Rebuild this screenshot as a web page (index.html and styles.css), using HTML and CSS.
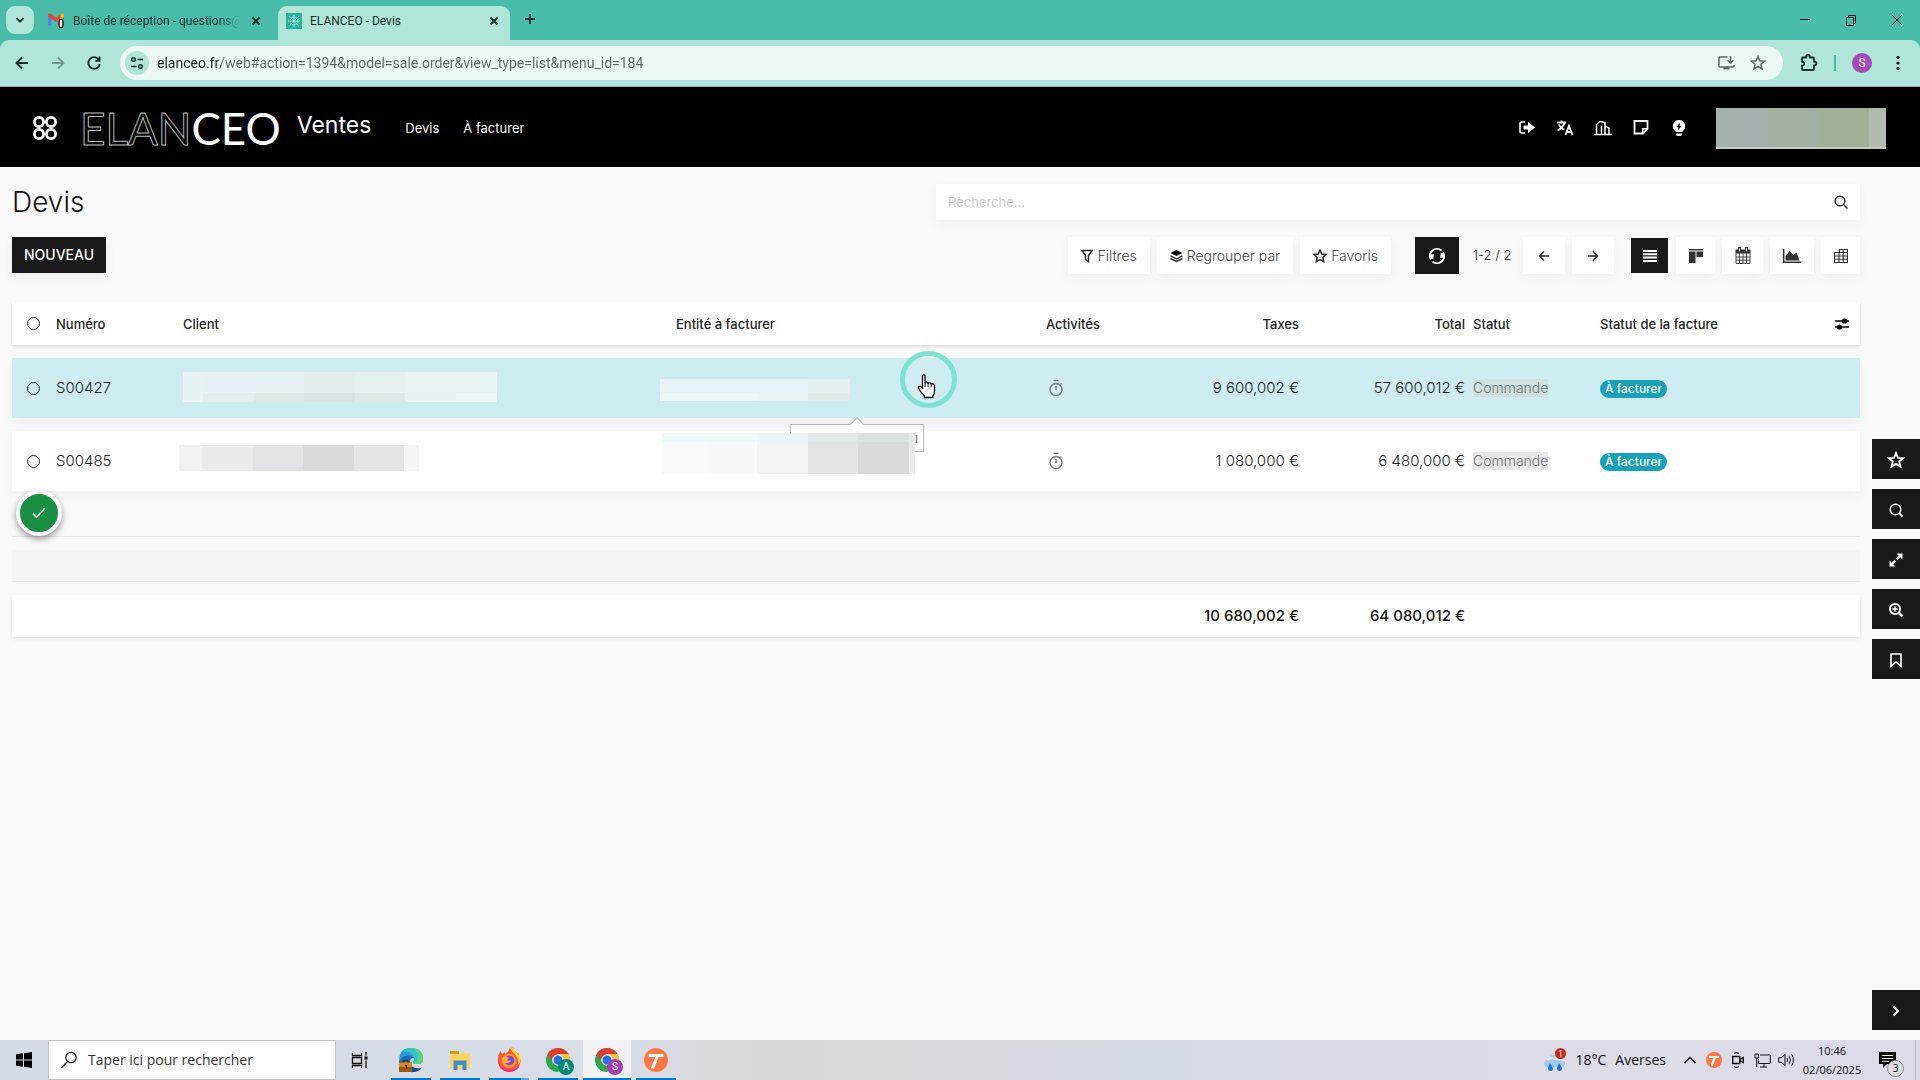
FILE: index.html
```html
<!DOCTYPE html>
<html lang="fr">
<head>
<meta charset="utf-8">
<title>ELANCEO - Devis</title>
<link rel="stylesheet" href="styles.css">
</head>
<body>
<div class="tabstrip">
  <button class="tab-list" aria-label="Rechercher des onglets"><svg width="12" height="12" viewBox="0 0 12 12"><path d="M2.5 4.2 6 7.7l3.500-3.500" class="line2"/></svg></button>
  <div class="tab">
    <svg class="favicon" width="17" height="16" viewBox="0 0 17 16"><path d="M0 2v10.500h3.500V5z" fill="#4285f4"/><path d="M0 3.500V1.500Q1 0 3 .8L8 4.800 13 .8V5L8 9z" fill="#ea4335"/><path d="M12.500 1.500Q15-.5 16 1.500V4l-3.500 3z" fill="#fbbc04"/><path d="M12.500 6.500 16 4v3z" fill="#34a853"/><rect x="10" y="6" width="6" height="9" rx="1.500" fill="#fff"/><rect x="11" y="6.500" width="4" height="8" rx="2" fill="#fff" stroke="#000" stroke-width="1.500"/></svg>
    <span class="tab-title tab-title-fade">Boîte de réception - questions@</span>
    <button class="tab-close" aria-label="Fermer l'onglet"><svg width="10" height="10" viewBox="0 0 10 10"><path d="m1.500 1.500 7 7m0-7-7 7" class="line2"/></svg></button>
  </div>
  <div class="tab tab-active">
    <svg class="favicon" width="16" height="16" viewBox="0 0 16 16"><path d="M0 0h16v16H0z" fill="#27b39c"/><g stroke="#c9f5ec" stroke-width="1" fill="none" stroke-dasharray="1.500 .7"><path d="M8 2v12M2 8h12M3.500 3.500l9 9M12.500 3.500l-9 9"/><circle cx="8" cy="8" r="4"/></g></svg>
    <span class="tab-title">ELANCEO - Devis</span>
    <button class="tab-close" aria-label="Fermer l'onglet"><svg width="10" height="10" viewBox="0 0 10 10"><path d="m1.500 1.500 7 7m0-7-7 7" class="line2"/></svg></button>
  </div>
  <button class="new-tab" aria-label="Nouvel onglet"><svg width="12" height="12" viewBox="0 0 12 12"><path d="M6 1v10M1 6h10" class="line2"/></svg></button>
  <div class="window-controls">
    <button aria-label="Réduire"><svg width="12" height="12" viewBox="0 0 12 12"><path d="M1 5.500h10" class="line1"/></svg></button>
    <button aria-label="Restaurer"><svg width="12" height="12" viewBox="0 0 12 12"><path d="M1.500 3.500h7v8h-7zM3.500 3.500v-2h7v8h-2" class="line1"/></svg></button>
    <button aria-label="Fermer"><svg width="12" height="12" viewBox="0 0 12 12"><path d="m1 1 10 10M11 1 1 11" class="line1"/></svg></button>
  </div>
</div>

<div class="toolbar">
  <button class="nav-btn" aria-label="Précédent"><svg width="16" height="16" viewBox="0 0 16 16"><path d="M14 8H3m5-5.500L2.500 8 8 13.500" class="line2"/></svg></button>
  <button class="nav-btn nav-off" aria-label="Suivant"><svg width="16" height="16" viewBox="0 0 16 16"><path d="M2 8h11M8 2.500 13.500 8 8 13.500" class="line2"/></svg></button>
  <button class="nav-btn" aria-label="Actualiser"><svg width="16" height="16" viewBox="0 0 16 16"><path d="M13 4.800A5.800 5.800 0 1 0 13.800 9M13.500 1.500v4.200H9.300" class="line2"/></svg></button>
  <div class="omnibox">
    <button class="site-info" aria-label="Informations du site"><svg width="14" height="14" viewBox="0 0 14 14"><circle cx="3.500" cy="3.500" r="1.800" class="line1b"/><circle cx="10.500" cy="10.500" r="1.800" class="line1b"/><path d="M7.500 3.500H13M1 10.500h5.500" class="line1b"/></svg></button>
    <input class="url" type="text" aria-label="Adresse" value="elanceo.fr/web#action=1394&amp;model=sale.order&amp;view_type=list&amp;menu_id=184">
    <button class="omni-btn" aria-label="Installer"><svg width="17" height="16" viewBox="0 0 17 16"><path d="M9.500 2H2Q1 2 1 3v8q0 1 1 1h13q1 0 1-1v-1M12.500 1v7M9.700 5.300l2.800 2.800 2.800-2.800" class="grey-line"/><path d="M5.500 12h6v2.500h-6z" fill="#5c6764"/></svg></button>
    <button class="omni-btn" aria-label="Ajouter aux favoris"><svg width="16" height="16" viewBox="0 0 16 16"><path d="m8 1.500 1.800 4.300 4.700.4-3.600 3.100 1.100 4.700L8 11.500 4 14l1.100-4.700-3.600-3.100 4.700-.4z" class="grey-line"/></svg></button>
  </div>
  <button class="ext" aria-label="Extensions"><svg width="18" height="18" viewBox="0 0 18 18"><path d="M2 4.500q0-1 1-1h3q.3-2.500 2-2.500t2 2.500h3q1 0 1 1v3q2.500.3 2.500 2t-2.500 2V15q0 1-1 1H3q-1 0-1-1v-3.300q2.200-.3 2.200-2T2 7.700z" fill="none" stroke="#17302b" stroke-width="1.800"/></svg></button>
  <span class="divider"></span>
  <button class="avatar" aria-label="Profil S">S</button>
  <button class="kebab" aria-label="Menu"><svg width="4" height="16" viewBox="0 0 4 16"><circle cx="2" cy="2.500" r="1.600"/><circle cx="2" cy="8" r="1.600"/><circle cx="2" cy="13.500" r="1.600"/></svg></button>
</div>

<header class="app-header">
  <button class="apps" aria-label="Applications"><svg width="26" height="26" viewBox="0 0 26 26"><g fill="none" stroke="#fff" stroke-width="2.800"><circle cx="7" cy="7" r="4.600"/><circle cx="19" cy="7" r="4.600"/><circle cx="7" cy="19" r="4.600"/><circle cx="19" cy="19" r="4.600"/></g></svg></button>
  <a class="logo" href="#"><span class="logo-outline">ELAN</span><span>CEO</span></a>
  <a class="app-name" href="#">Ventes</a>
  <nav class="menu"><a href="#">Devis</a><a href="#">À facturer</a></nav>
  <div class="systray">
    <button aria-label="Déconnexion"><svg width="18" height="18" viewBox="0 0 18 18"><path d="M7 3H3.500Q2 3 2 4.500v8Q2 14 3.500 14H7" fill="none" stroke="#fff" stroke-width="1.600"/><path d="M5.500 6.500H10V3l7 5.500-7 5.500v-3.500H5.500z" fill="#fff"/></svg></button>
    <button aria-label="Langue"><svg width="18" height="18" viewBox="0 0 18 18"><path d="M1 3.500h9M5.500 1.500v2M8.500 3.500Q7.500 8.500 1.500 11.500M3 5.500q1.500 4 5.500 5M9.500 16l3.400-9 3.600 9M10.800 13h4.500" fill="none" stroke="#fff" stroke-width="1.800"/></svg></button>
    <button aria-label="Société"><svg width="18" height="18" viewBox="0 0 18 18"><path d="M0 15.500h18M2.500 15.500V5.500L6 2.500l5 1v12M7.500 15.500V6.500M11 7l4 2v6.500" fill="none" stroke="#fff" stroke-width="1.500"/></svg></button>
    <button aria-label="Notes"><svg width="18" height="18" viewBox="0 0 18 18"><path d="M2.500 2h13v8l-4.500 4.500H2.500z" fill="none" stroke="#fff" stroke-width="1.800"/><path d="M16 9h-6v6z" fill="#fff"/><path d="m11.500 12.500 2-2h-2z"/></svg></button>
    <button aria-label="Aide"><svg width="18" height="18" viewBox="0 0 18 18"><path d="M9 1a6.200 6.200 0 0 1 3.500 11.300V13h-7v-.7A6.200 6.200 0 0 1 9 1z" fill="#fff"/><path d="M6 14.500h6v1q0 1.500-3 1.500t-3-1.500z" fill="#fff"/><path d="M10 3.500 6.500 8.200h2l-.700 3.300L11.500 7h-2z"/></svg></button>
  </div>
  <div class="user-mask"></div>
</header>

<main class="page">
  <section class="content">
    <div class="title-row">
      <h1>Devis</h1>
      <div class="search">
        <input type="search" placeholder="Recherche..." aria-label="Recherche">
        <button aria-label="Lancer la recherche"><svg width="14" height="14" viewBox="0 0 14 14"><circle cx="6" cy="6" r="4.800" class="dark-line"/><path d="m9.500 9.500 4 4" class="dark-line"/></svg></button>
      </div>
    </div>
    <div class="action-row">
      <button class="btn-new">NOUVEAU</button>
      <div class="filters">
        <button class="card"><svg width="12" height="14" viewBox="0 0 12 14"><path d="M1 1.500h10L7.500 6.500v6l-3-2v-4z" class="dark-line"/></svg>Filtres</button>
        <button class="card"><svg width="13" height="14" viewBox="0 0 13 14"><path d="m6.500 1 6 3-6 3-6-3z"/><path d="m.5 6.800 6 3 6-3M.5 9.500l6 3 6-3" fill="none" stroke="#333" stroke-width="1.400"/></svg>Regrouper par</button>
        <button class="card"><svg width="14" height="14" viewBox="0 0 14 14"><path d="m7 1 1.800 4 4.200.5-3.100 2.900.8 4.300L7 10.600l-3.700 2.100.8-4.300L1 5.500 5.200 5z" class="dark-line"/></svg>Favoris</button>
      </div>
      <button class="refresh" aria-label="Rafraîchir"><svg width="18" height="18" viewBox="0 0 18 18"><path d="M3 12.500A7 7 0 0 1 13.500 3.500M15 5.500A7 7 0 0 1 4.500 14.500" fill="none" stroke="#fff" stroke-width="1.900"/><path d="M1 6.500l2.500 1 2.300-.5-.5 5L2 12zM17 11.500l-2.500-1-2.300.5.500-5L16 6z" fill="#fff"/></svg></button>
      <span class="pager">1-2 / 2</span>
      <div class="arrows">
        <button class="card" aria-label="Page précédente"><svg width="12" height="12" viewBox="0 0 12 12"><path d="M11 6H1.500M6 1.500 1.500 6 6 10.500" class="dark-line"/></svg></button>
        <button class="card" aria-label="Page suivante"><svg width="12" height="12" viewBox="0 0 12 12"><path d="M1 6h9.500M6 1.500 10.500 6 6 10.500" class="dark-line"/></svg></button>
      </div>
      <div class="views">
        <button class="view-on" aria-label="Liste"><svg width="14" height="12" viewBox="0 0 14 12"><path d="M0 1h14M0 4.300h14M0 7.600h14M0 11h14" stroke="#fff" stroke-width="2"/></svg></button>
        <button class="card" aria-label="Kanban"><svg width="14" height="14" viewBox="0 0 14 14"><path d="M0 0h14v1.500H0zM0 2.500h6.500V14H0zM7.500 2.500H14V8H7.500z" fill="#333"/></svg></button>
        <button class="card card-mid" aria-label="Calendrier"><svg width="16" height="18" viewBox="0 0 16 18"><path d="M1 6.500V16.500h14V6.500M1 10h14M1 13.200h14M4.500 6v10.500M8 6v10.500M11.500 6v10.500" fill="none" stroke="#444"/><path d="M.5 2.500h15V6.500H.5z" fill="#333"/><path d="M4.500 1v3.500M11.500 1v3.500" stroke="#333" stroke-width="3" stroke-linecap="round"/><path d="M4.500 1.200v3.200M11.500 1.200v3.200" stroke="#fff"/></svg></button>
        <button class="card card-wide" aria-label="Graphique"><svg width="18" height="14" viewBox="0 0 18 14"><path d="M.7 0v13.300H18" fill="none" stroke="#333" stroke-width="1.400"/><path d="M2.500 11.500V7l4.200-5 3.800 4 3-2.500 3 8z" fill="#333"/></svg></button>
        <button class="card" aria-label="Tableau croisé"><svg width="14" height="14" viewBox="0 0 14 14"><path d="M5.500 3.500v-3h8v13h-13v-10h13M.5 7h13M.5 10.200h13M5 3.500v10M9.200.5v13" fill="none" stroke="#333" stroke-width="1.100"/></svg></button>
      </div>
    </div>

    <table class="orders">
      <colgroup><col class="c-sel"><col class="c-num"><col><col class="c-entity"><col class="c-act"><col class="c-tax"><col class="c-total"><col class="c-status"><col class="c-inv"><col class="c-sel"></colgroup>
      <thead>
        <tr>
          <th class="pick"><input type="checkbox" aria-label="Tout sélectionner"></th><th>Numéro</th><th>Client</th><th>Entité à facturer</th><th>Activités</th><th class="num">Taxes</th><th class="num">Total</th><th>Statut</th><th>Statut de la facture</th>
          <th class="pick"><button aria-label="Colonnes optionnelles"><svg width="14" height="12" viewBox="0 0 14 12"><path d="M0 3h14M0 9h14" stroke="#000" stroke-width="1.400"/><circle cx="9.500" cy="3" r="2.600"/><circle cx="4.500" cy="9" r="2.600"/></svg></button></th>
        </tr>
      </thead>
      <tbody>
        <tr class="hovered">
          <td class="pick"><input type="checkbox" aria-label="Sélectionner S00427"></td><td>S00427</td><td><span class="mask mask-client-1"></span></td>
          <td><span class="mask mask-entity-1"></span></td>
          <td class="activity"><svg width="14" height="18" viewBox="0 0 14 18"><circle cx="7" cy="10.500" r="6" /><path d="M4.500 1.500h5M7 7v4M11.500 4.500l1 1"/></svg></td>
          <td class="num">9 600,002 €</td><td class="num">57 600,012 €</td><td><span class="state">Commande</span></td><td><span class="badge">À facturer</span></td><td></td>
        </tr>
        <tr>
          <td class="pick"><input type="checkbox" aria-label="Sélectionner S00485"></td><td>S00485</td><td><span class="mask mask-client-2"></span></td>
          <td><span class="tooltip">l</span><span class="mask mask-entity-2"></span></td>
          <td class="activity"><svg width="14" height="18" viewBox="0 0 14 18"><circle cx="7" cy="10.500" r="6" /><path d="M4.500 1.500h5M7 7v4M11.500 4.500l1 1"/></svg></td>
          <td class="num">1 080,000 €</td><td class="num">6 480,000 €</td><td><span class="state">Commande</span></td><td><span class="badge">À facturer</span></td><td></td>
        </tr>
        <tr class="empty"><td colspan="10"></td></tr>
        <tr class="empty empty-alt"><td colspan="10"></td></tr>
      </tbody>
      <tfoot>
        <tr><td colspan="5"></td><td class="num">10 680,002 €</td><td class="num">64 080,012 €</td><td colspan="3"></td></tr>
      </tfoot>
    </table>
  </section>

  <aside class="rail">
    <button aria-label="Favoris"><svg width="18" height="18" viewBox="0 0 18 18"><path d="m9 2 2 4.800 5.200.4-4 3.400 1.300 5L9 12.900l-4.500 2.700 1.300-5-4-3.400L7 6.800z" fill="none" stroke="#fff" stroke-width="1.800"/></svg></button>
    <button aria-label="Rechercher"><svg width="16" height="16" viewBox="0 0 16 16"><circle cx="7.500" cy="7.500" r="5.300" fill="none" stroke="#fff" stroke-width="1.500"/><path d="m11 11 3.500 3.500" stroke="#fff" stroke-width="1.800"/></svg></button>
    <button aria-label="Plein écran"><svg width="16" height="16" viewBox="0 0 16 16"><path d="m4 12 3.300-3.300M8.700 7.300 12 4" stroke="#fff" stroke-width="2.400"/><path d="M8.500 1.500h6v6zM1.500 8.500v6h6z" fill="#fff"/></svg></button>
    <button aria-label="Agrandir"><svg width="16" height="16" viewBox="0 0 16 16"><circle cx="7" cy="7" r="5" fill="none" stroke="#fff" stroke-width="2"/><path d="M7 4.200v5.600M4.200 7h5.600" stroke="#fff" stroke-width="1.400"/><path d="m10.500 10.500 4 4" stroke="#fff" stroke-width="2.600"/></svg></button>
    <button aria-label="Signet"><svg width="16" height="16" viewBox="0 0 16 16"><path d="M3 2h10v12l-5-4-5 4z" fill="none" stroke="#fff" stroke-width="1.600"/></svg></button>
    <button class="rail-last" aria-label="Replier"><svg width="10" height="12" viewBox="0 0 10 12"><path d="m2.500 1.500 4.500 4.500-4.500 4.500" fill="none" stroke="#fff" stroke-width="2"/></svg></button>
  </aside>

  <button class="done" aria-label="Terminé"><svg width="14" height="12" viewBox="0 0 14 12"><path d="m1 6.500 3.500 4L13 1" fill="none" stroke="#fff" stroke-width="1.400"/></svg></button>
  <div class="pointer-ring">
    <svg width="20" height="25" viewBox="0 0 20 25"><path d="M5.500 14V2.500q0-1.500 1.300-1.500t1.300 1.500V8q2.500-.7 3 1 2.500-.7 3 .900 3-.6 3.400 1.600v5.500q0 3-1.700 5v1.500H7.500v-1.500Q3.500 18 1.500 14.500q-.5-2.500 1.500-2.300z" fill="#fff" stroke="#111" stroke-width="1.300"/><path d="M8.100 8v5M11.100 9v4M14.100 10v3.500" stroke="#111" fill="none"/></svg>
  </div>
</main>

<footer class="taskbar">
  <button class="start" aria-label="Démarrer"><svg width="16" height="16" viewBox="0 0 16 16"><path d="m0 2.300 7-1v6.200H0zM8 1.200 16 0v7.500H8zM0 8.500h7v6.200l-7-1zM8 8.500h8V16l-8-1.200z"/></svg></button>
  <label class="os-search"><svg width="18" height="18" viewBox="0 0 18 18"><circle cx="11" cy="6.500" r="5.200" fill="none" stroke="#222" stroke-width="1.300"/><path d="M7.500 10.500 1.500 17" stroke="#222" stroke-width="1.400"/></svg><input type="text" placeholder="Taper ici pour rechercher" aria-label="Taper ici pour rechercher"></label>
  <button class="task-view" aria-label="Vue des tâches"><svg width="18" height="16" viewBox="0 0 18 16"><path d="M1.500 1v2.500h9V1M1.500 5.500h9v6h-9zM1.500 16v-2.500h9V16M15 0v3.500M15 8.500V16" fill="none" stroke="#111" stroke-width="1.300"/><path d="M13.500 4.500h3v3h-3z"/></svg></button>
  <div class="apps-bar">
    <button aria-label="Edge"><svg width="26" height="26" viewBox="0 0 26 26"><path d="M1 14Q1 1 13 1q12 .5 12 11.500 0 4.500-5.500 4.500-5 0-4.500-2.500 1.500-1 .5-3.500Q14 8 10 8 4 8 1 14z" fill="#1f9fd8"/><path d="M5 4Q8 1 13 1q12 .5 12 11.500 0 4.500-5.500 4.500-5 0-4.500-2.500 2.500-1 1-4.500Q13 4 5 4z" fill="#35c1c8"/><path d="M14 1q11 1 11 11.500 0 4.500-5.500 4.500-3.500 0-4.300-1.300Q21 15 20 8q-1-4-6-7z" fill="#58d67c"/><path d="M1 14q3-6 9-6 4.500 0 5.500 3-3.500 0-3.500 4 1 7 9 6.500 2-.3 3-1-4 4.500-11 4.500Q1 24 1 14z" fill="#1470c4"/><path d="M12 15q1 7 9 6.500 1.500 0 3-1Q20 26 12 25z" fill="#174f91"/><path d="M1 15.500h13V25H1z" fill="#9c5710"/><path d="M1 15.500h13v4.500H1z" fill="#d88a1f"/><path d="M5 15.500v-2h5v2M7 18.500h1.500v3" fill="none" stroke="#5d3000" stroke-width="1.300"/></svg></button>
    <button aria-label="Explorateur de fichiers"><svg width="24" height="22" viewBox="0 0 24 22"><path d="M2 2h9l2 2.500h9V20H2z" fill="#fcd462"/><path d="M2 2h9v3H2z" fill="#d79b1c"/><path d="M5.500 21v-9.500h13V21h-4v-5h-5v5z" fill="#3b8fd0"/></svg></button>
    <button class="split" aria-label="Firefox"><svg width="26" height="26" viewBox="0 0 26 26"><path d="M2 12Q2 7 4.500 4l1.500 3 3-2v2q3-1 4.500-5.500Q16 .5 17 .5q1 3.500 4 6l1-1q3 4 2.500 8.500A11.300 11.300 0 0 1 13 25 11.300 11.300 0 0 1 2 12z" fill="#ff5a36"/><path d="M14 1q2 4 5 6.500 4.500 5 2.500 11 4-4 3-10Q21 8 17 .5z" fill="#ffd43a"/><path d="M2 14q1 9 11 11 8 0 11-7-3 4-8 4.500Q5 23 2 14z" fill="#f4268a"/><circle cx="13" cy="14" r="7.200" fill="#ff9a28"/><circle cx="13.500" cy="13.500" r="4.800" fill="#8447e0"/><path d="M6 11q4-3 7 0l-2 2q2 1 4 .5-1 3-5 2.500T6 11z" fill="#ffb236"/></svg></button>
    <button aria-label="Chrome A"><svg width="26" height="26" viewBox="0 0 26 26"><circle cx="13" cy="13" r="12" fill="#2da94f"/><path d="M2.600 7A12 12 0 0 1 23.400 7L13 8z" fill="#e33b2e"/><path d="M2.600 7 8 16l5-9z" fill="#e33b2e"/><path d="M13 7h10.400A12 12 0 0 1 13 25l5-9z" fill="#fcc934"/><circle cx="13" cy="13" r="5.800" fill="#fff"/><circle cx="13" cy="13" r="4.500" fill="#1a73e8"/></svg><span class="chip chip-a">A</span></button>
    <button class="current" aria-label="Chrome S"><svg width="26" height="26" viewBox="0 0 26 26"><circle cx="13" cy="13" r="12" fill="#2da94f"/><path d="M2.600 7A12 12 0 0 1 23.400 7L13 8z" fill="#e33b2e"/><path d="M2.600 7 8 16l5-9z" fill="#e33b2e"/><path d="M13 7h10.400A12 12 0 0 1 13 25l5-9z" fill="#fcc934"/><circle cx="13" cy="13" r="5.800" fill="#fff"/><circle cx="13" cy="13" r="4.500" fill="#1a73e8"/></svg><span class="chip chip-s">S</span></button>
    <button aria-label="Tango"><svg width="24" height="24" viewBox="0 0 24 24"><circle cx="12" cy="12" r="12" fill="#ff7744"/><path d="M4.500 7.500h15M13.500 7.500 8.500 20.500" fill="none" stroke="#fff" stroke-width="3.200"/></svg></button>
  </div>
  <div class="tray">
    <button class="weather"><svg width="24" height="26" viewBox="0 0 24 26"><path d="M5 20Q1 20 1 16.500T5 13q1-5 6.500-5Q17 8 18 13q4 0 4 3.500T18 20z" fill="#9fc8f2"/><path d="M4 14q3-3 9-1t8 1q-2-3-6-4T6 10z" fill="#dcecfb"/><path d="m7 16 3 5q0 3-2.500 3T5 21zM16 16l3 5q0 3-2.500 3T14 21z" fill="#1976e0"/><circle cx="17.500" cy="6.500" r="5.500" fill="#c42b1c"/><text x="17.500" y="10" text-anchor="middle" font-size="9" fill="#fff">1</text></svg><span>18°C</span><span>Averses</span></button>
    <button aria-label="Icônes cachées"><svg width="12" height="8" viewBox="0 0 12 8"><path d="m.5 7 5.500-5.500L11.500 7" class="line1b"/></svg></button>
    <button aria-label="Tango"><svg width="16" height="16" viewBox="0 0 24 24"><circle cx="12" cy="12" r="12" fill="#ff7744"/><path d="M4.500 7.500h15M13.500 7.500 8.500 20.500" fill="none" stroke="#fff" stroke-width="3.200"/></svg></button>
    <button aria-label="Caméra"><svg width="12" height="16" viewBox="0 0 12 16"><path d="M.7 4.500h7v7h-7zM7.700 7.500l3.500-2v5l-3.500-2M2 1.500q2.500-1.500 5 0M2 14.500q2.500 1.500 5 0" class="line1b"/></svg></button>
    <button aria-label="Réseau"><svg width="17" height="15" viewBox="0 0 17 15"><path d="M6 2h10.300v8.500H4.500V6M10 10.500v3.500M6 14h7M1 1h3.500v4H1zM2.700 5v9" class="line1"/></svg></button>
    <button aria-label="Volume"><svg width="17" height="14" viewBox="0 0 17 14"><path d="M.7 4.700h2.600L7 1.500v11L3.300 9.300H.700zM9 5q1 2 0 4M11.300 3.200q2.200 3.800 0 7.600M13.700 1.500q3.500 5.500 0 11" class="line1"/></svg></button>
    <button class="clock"><span>10:46</span><span>02/06/2025</span></button>
    <button class="notif" aria-label="3 notifications"><svg width="17" height="16" viewBox="0 0 17 16"><path d="M0 0h17v12h-9l-4 4v-4H0z"/><path d="M3 3.500h11M3 6.500h11M3 9.300h7" stroke="#fff"/></svg><span class="notif-count">3</span></button>
    <span class="show-desktop"></span>
  </div>
</footer>
</body>
</html>
```
FILE: styles.css
```css
* { box-sizing: border-box; }

body {
  margin: 0;
  min-height: 100vh;
  display: flex;
  flex-direction: column;
  background: #f9f9f9;
  color: #222;
  font: 14px/20px "Inter", sans-serif;
}

button {
  display: flex;
  align-items: center;
  justify-content: center;
  flex-shrink: 0;
  margin: 0;
  padding: 0;
  border: 0;
  background: none;
  color: inherit;
  font: inherit;
}

a { color: inherit; text-decoration: none; }
svg { display: block; flex-shrink: 0; }
input { min-width: 0; border: 0; outline: 0; background: none; font: inherit; }

.line1 { fill: none; stroke: #111; stroke-width: 1; }
.line1b { fill: none; stroke: #17302b; stroke-width: 1.4; }
.line2 { fill: none; stroke: #17302b; stroke-width: 1.9; }
.grey-line { fill: none; stroke: #5c6764; stroke-width: 1.5; }
.dark-line { fill: none; stroke: #2b2b2b; stroke-width: 1.5; }

/* Browser chrome */
.tabstrip {
  display: flex;
  height: 40px;
  padding: 6px 0 0 6px;
  background: #4abcaa;
  font: 12px/20px Roboto, sans-serif;
  color: #17302b;
}

.tab-list { width: 28px; height: 28px; border-radius: 9px; background: #b0e5da; }

.tab {
  display: flex;
  align-items: center;
  width: 230px;
  height: 34px;
  margin-left: 8px;
  padding: 0 8px 4px 6px;
}
.tab-title { flex: 1; margin-left: 8px; overflow: hidden; white-space: nowrap; }
.tab-title-fade {
  mask-image: linear-gradient(to right, #000 88%, transparent);
}
.tab-close { width: 16px; height: 16px; margin-left: 8px; }

.tab-active {
  width: 232px;
  margin-left: 6px;
  padding-left: 8px;
  border-radius: 9px 9px 0 0;
  background: #b0e5da;
}

.new-tab { width: 28px; height: 28px; margin: -1px 0 0 6px; }
.window-controls { display: flex; margin: -6px 0 0 auto; }
.window-controls button { width: 46px; height: 40px; }

.toolbar {
  display: flex;
  align-items: center;
  height: 47px;
  padding: 0 11px 0 4px;
  border-bottom: 1px solid #9db5b0;
  border-radius: 9px 9px 0 0;
  background: #b0e5da;
}
.tabstrip { margin-bottom: -9px; padding-bottom: 9px; height: 49px; }
.toolbar { position: relative; }

.nav-btn { width: 36px; height: 36px; }
.nav-off { opacity: .4; }

.omnibox {
  display: flex;
  align-items: center;
  flex: 1;
  height: 34px;
  margin-left: 8px;
  padding: 0 9px 0 5px;
  border-radius: 17px;
  background: #ebf8f5;
}

.site-info { width: 24px; height: 24px; border-radius: 50%; background: #b0e5da; }

.url {
  flex: 1;
  margin-left: 8px;
  padding: 0;
  background: linear-gradient(to right, #17211f 64px, #5c6764 64px);
  background-clip: text;
  color: transparent;
  font: 14px/20px Roboto, sans-serif;
}

.omni-btn { width: 32px; height: 32px; }
.ext { width: 20px; margin-left: 16px; }
.divider { width: 2px; height: 16px; margin: 0 16px 0 15px; background: #4abcaa; }
.avatar {
  width: 20px;
  height: 20px;
  border-radius: 50%;
  background: #a847b6;
  color: #fff;
  font: 12px/20px Roboto, sans-serif;
}
.kebab { width: 22px; height: 22px; margin-left: 15px; }

/* Application header */
.app-header {
  display: flex;
  align-items: center;
  height: 80px;
  padding: 2px 34px 0 32px;
  background: #000;
  color: #fff;
}

.logo {
  display: flex;
  margin-left: 22px;
  font: 400 44px/44px Lato, sans-serif;
}
.logo-outline { color: #000; -webkit-text-stroke: 1px #b8b8b8; }
.app-name { margin: -6px 0 0 16px; font-size: 23px; line-height: 28px; }
.menu { display: flex; gap: 24px; margin-left: 34px; font-size: 13px; }
.systray { display: flex; gap: 20px; margin-left: auto; }
.user-mask {
  width: 170px;
  height: 41px;
  margin-left: 28px;
  border-bottom: 2px solid #c6cabd;
  background: linear-gradient(to right, #a5b1af 52px, #a2afa3 52px 102px, #a2b098 102px 153px, #b1bbb0 153px);
}

/* Page */
.page { position: relative; display: flex; flex: 1; }
.content { flex: 1; padding: 17px 0 0 12px; }

.title-row { display: flex; align-items: center; justify-content: space-between; }
h1 { margin: 0; font-size: 28px; line-height: 36px; font-weight: 300; color: #111; }

.search {
  display: flex;
  width: 50%;
  height: 36px;
  padding: 0 12px;
  background: #fff;
  box-shadow: 0 4px 12px rgba(0, 0, 0, .04);
}
.search input { flex: 1; padding: 0; font-size: 13px; }
.search input::placeholder { color: #ccc; }
.search button { width: 14px; }

.action-row { display: flex; align-items: flex-start; height: 37px; margin-top: 17px; }

.btn-new {
  height: 36px;
  padding: 0 12px;
  background: #191919;
  color: #fff;
  font-size: 14px;
  font-weight: 500;
  box-shadow: 0 4px 12px rgba(0, 0, 0, .05);
}

.filters, .arrows, .views { display: flex; gap: 7px; }
.filters { margin-left: auto; }
.card {
  gap: 4px;
  height: 37px;
  background: #fff;
  color: #444;
  box-shadow: 0 4px 12px rgba(0, 0, 0, .04);
}
.filters .card { padding: 0 13px; font-weight: 300; }
.refresh { width: 44px; height: 37px; margin-left: 24px; background: #191919; }
.pager { width: 64px; padding: 8px 0 0 14px; font-size: 13px; font-weight: 300; white-space: nowrap; }
.arrows .card { width: 42px; }
.views { margin-left: 17px; }
.view-on { width: 37px; height: 35px; margin: 1px 1px 0 0; background: #191919; }
.views .card { width: 39px; }
.views .card-mid { width: 41px; }
.views .card-wide { width: 44px; }

.orders {
  width: 100%;
  margin-top: 15px;
  border-collapse: separate;
  border-spacing: 0 13px;
  table-layout: fixed;
}
.c-sel { width: 40px; }
.c-num, .c-status { width: 127px; }
.c-entity { width: 370px; }
.c-act { width: 138px; }
.c-tax { width: 123px; }
.c-total { width: 166px; }
.c-inv { width: 224px; }

th, td { padding: 0 4px; text-align: left; vertical-align: middle; white-space: nowrap; }
th { height: 43px; font-size: 13px; font-weight: 500; color: #222; }
thead tr { background: #fff; box-shadow: 0 2px 3px rgba(0, 0, 0, .12); }
td { position: relative; height: 60px; font-size: 15px; font-weight: 300; }
tbody tr { background: #fff; box-shadow: 0 6px 12px rgba(0, 0, 0, .04); }
tbody .hovered { background: #cfecf0; }
.num { text-align: right; }
.pick { padding: 0 13px 0 15px; }
.pick button { height: 14px; }
.pick input {
  display: block;
  appearance: none;
  width: 13px;
  height: 13px;
  margin: 0;
  border: 1px solid #222;
  border-radius: 50%;
}
.activity svg { margin-left: 3px; fill: none; stroke: #777d80; stroke-width: 1.5; }

.state {
  display: inline-block;
  background: #e8e8e8;
  color: #6c7278;
  font-size: 14px;
  line-height: 18px;
}
.hovered .state { background: #d0dfdf; }
.badge {
  display: inline-block;
  padding: 0 5px;
  border-radius: 9px;
  background: #18a2b8;
  color: #fff;
  font-size: 12px;
  line-height: 18px;
  font-weight: 500;
}

tbody .empty { background: none; box-shadow: none; }
.empty td { height: 33px; border-bottom: 1px solid #e8e8e8; }
.empty-alt td { height: 32px; background: #f5f5f5; }
tfoot tr { background: #fff; box-shadow: 0 2px 3px rgba(0, 0, 0, .08); }
tfoot td { height: 42px; font-weight: 500; color: #111; }

/* Pixelated privacy masks lying over the cells */
.mask { position: absolute; }
.mask-client-1 {
  left: 4px; top: 14px; width: 314px; height: 30px;
  background:
    linear-gradient(to right, #e9f3f6 20px, #e4edf0 20px 71px, #e0e8ea 71px 121px, #dae3e5 121px 172px, #e0e8ea 172px 222px, #e9f3f6 222px 273px, #edf7f9 273px) 0 100% / 100% 9px no-repeat,
    linear-gradient(to right, #e8f3f6 20px, #e6f2f5 20px 121px, #e4eff2 121px 172px, #e6f1f3 172px 222px, #e9f4f6 222px);
}
.mask-client-2 {
  left: 0; top: 14px; width: 240px; height: 26px;
  background: linear-gradient(to right, #f1f3f3 23px, #eaeceb 23px 74px, #e2e3e4 74px 124px, #d9dadc 124px 175px, #e4e6e5 175px 225px, #f4f5f7 225px);
}
.mask-entity-1 {
  left: -12px; top: 21px; width: 190px; height: 22px;
  background:
    linear-gradient(to right, #edf7f9 98px, #eaf4f6 98px 148px, #e2eaec 148px) 0 100% / 100% 8px no-repeat,
    linear-gradient(to right, #e8f4f7 148px, #e5f0f3 148px);
}
.mask-entity-2 {
  left: -10px; top: 2px; width: 253px; height: 41px;
  background:
    linear-gradient(to right, #eef7fa 95px, #ebf4f6 95px 146px, #e2e9eb 146px 196px, #dbe2e4 196px 247px, #e2e9eb 247px) 0 0 / 100% 9px no-repeat,
    linear-gradient(to right, #f8fafa 45px, #f6f8fb 45px 95px, #f2f4f4 95px 146px, #e3e5e4 146px 196px, #d8dad9 196px 247px, #e8eae9 247px);
}

.tooltip {
  position: absolute;
  left: 118px;
  top: -7px;
  width: 134px;
  height: 28px;
  padding: 4px 5px;
  border: 1px solid #bbb;
  background: #fff;
  color: #555;
  font-size: 11px;
  font-weight: 400;
  text-align: right;
}
.tooltip::before {
  content: "";
  position: absolute;
  left: 61px;
  top: -6px;
  width: 9px;
  height: 9px;
  border: solid #bbb;
  border-width: 1px 0 0 1px;
  background: #fff;
  transform: rotate(45deg);
}

.rail {
  display: flex;
  flex-direction: column;
  align-items: flex-end;
  gap: 10px;
  width: 60px;
  padding: 272px 0 10px;
}
.rail button { width: 48px; height: 40px; padding-top: 2px; background: #191919; }
.rail .rail-last { margin-top: auto; }

.done {
  position: absolute;
  left: 16px;
  top: 323px;
  width: 46px;
  height: 46px;
  border: 4px solid #fff;
  border-radius: 50%;
  background: #198f43;
  box-shadow: 0 3px 6px rgba(0, 0, 0, .4);
}
.pointer-ring {
  position: absolute;
  left: 900px;
  top: 184px;
  display: flex;
  justify-content: center;
  width: 57px;
  height: 57px;
  padding: 18px 4px 0 0;
  border: 5px solid #7de3d0;
  border-radius: 50%;
}

/* Operating system task bar */
.taskbar {
  display: flex;
  height: 40px;
  background: linear-gradient(to right, #d3dbe5, #d8dde6 32%, #d8d8d9 40%, #d5dbe3 60%, #dcdbe6 80%, #dddbe7);
  color: #111;
  font: 14px/20px "Open Sans", sans-serif;
}
.start { width: 48px; }
.os-search {
  display: flex;
  align-items: center;
  gap: 10px;
  width: 288px;
  padding-left: 11px;
  border: 1px solid #c2c5c9;
  background: #fff;
}
.os-search input { flex: 1; padding: 0; font-size: 14px; }
.os-search input::placeholder { color: #333; }
.task-view { width: 51px; padding-right: 3px; }
.apps-bar { display: flex; gap: 1px; }
.apps-bar button { position: relative; width: 48px; }
.apps-bar button::after {
  content: "";
  position: absolute;
  left: 4px;
  right: 4px;
  bottom: 0;
  height: 2px;
  background: #0078d7;
}
.apps-bar .split::after { background: linear-gradient(to right, #0078d7 32px, #62a9e2 32px); }
.apps-bar .current { background: #f0f2f5; }
.apps-bar .current::after { left: 0; right: 0; }
.chip {
  position: absolute;
  right: 8px;
  bottom: 5px;
  width: 16px;
  height: 16px;
  border-radius: 50%;
  color: #fff;
  font: 10px/16px Roboto, sans-serif;
}
.chip-a { background: #00897b; }
.chip-s { background: #a63fb5; }

.tray { display: flex; align-items: center; margin-left: auto; }
.tray button { width: 32px; height: 40px; }
.tray .weather { gap: 9px; width: auto; margin-right: 8px; }
.tray .line1b { stroke: #111; }
.tray button + button { margin-left: -8px; }
.tray .weather + button { margin-left: 0; }
.tray .clock { flex-direction: column; width: 76px; font-size: 11px; line-height: 19px; }
.tray .notif { position: relative; width: 45px; margin-left: 0; padding-right: 10px; }
.notif-count {
  position: absolute;
  right: 11px;
  bottom: 3px;
  width: 17px;
  height: 17px;
  border: 1px solid #888;
  border-radius: 50%;
  background: #ddd;
  font-size: 10px;
  line-height: 15px;
}
.show-desktop { width: 5px; height: 40px; border-left: 1px solid #b5b6c0; }
```
